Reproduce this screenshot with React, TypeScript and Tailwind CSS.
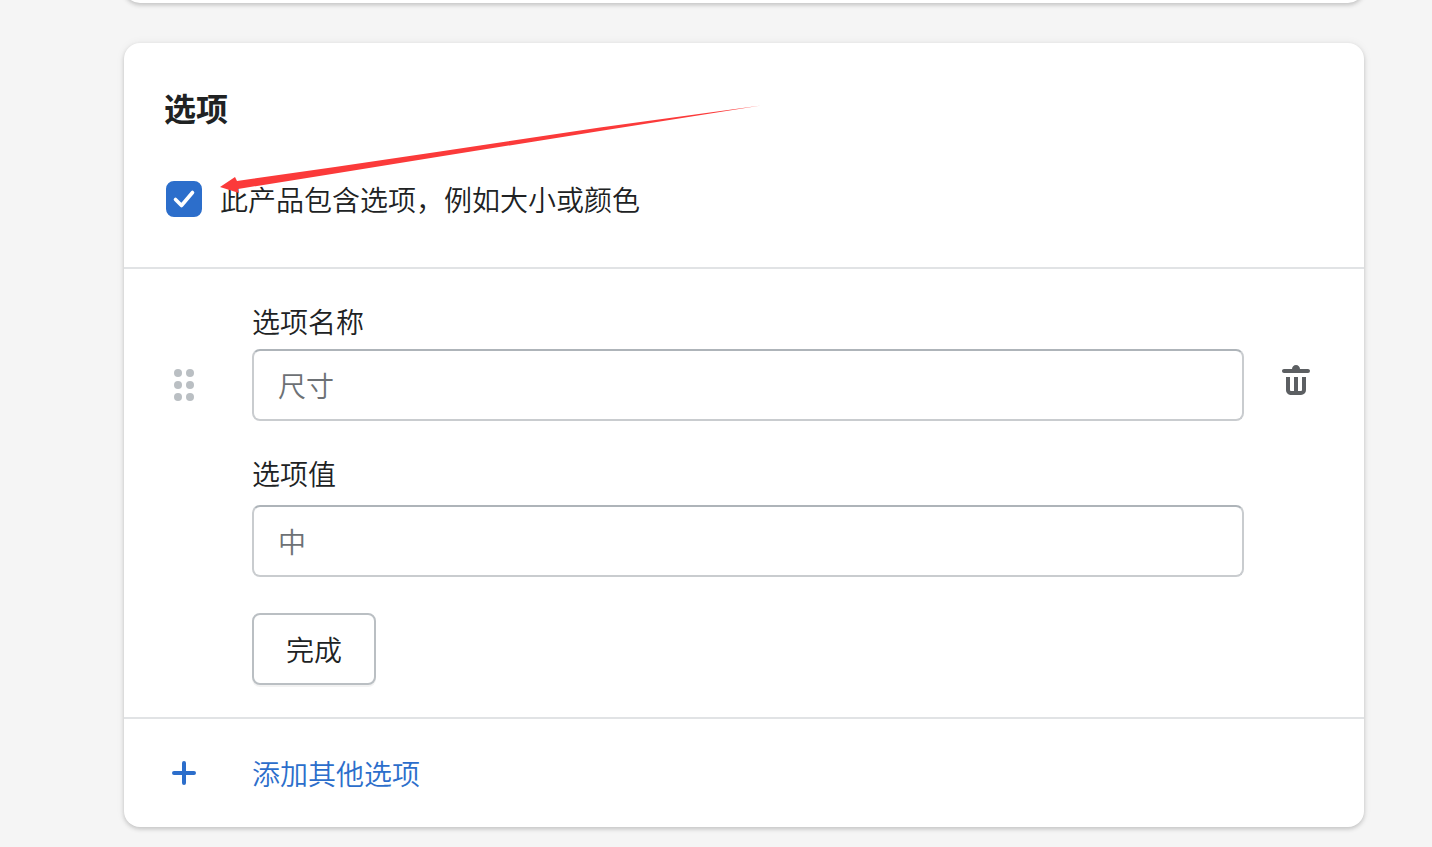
import { useState } from "react";

const DragHandle = () => (
  <svg viewBox="0 0 40 40" className="size-10 fill-[#babfc3]" aria-hidden="true">
    {[8, 20, 32].map((y) => (
      <g key={y}>
        <circle cx="14" cy={y} r="4" />
        <circle cx="26" cy={y} r="4" />
      </g>
    ))}
  </svg>
);

const TrashIcon = () => (
  <svg viewBox="0 0 20 20" className="size-10 fill-[#5c5f62]" aria-hidden="true">
    <path d="M8 3.994C8 2.893 8.895 2 10 2s2 .893 2 1.994h4c.552 0 1 .446 1 .997a1 1 0 0 1-1 .997H4c-.552 0-1-.447-1-.997s.448-.997 1-.997h4zM5 14.508V8h2v6.508a.5.5 0 0 0 .5.498H9V8h2v7.006h1.5a.5.5 0 0 0 .5-.498V8h2v6.508A2.496 2.496 0 0 1 12.5 17h-5C6.119 17 5 15.884 5 14.508z" />
  </svg>
);

const PlusIcon = () => (
  <svg viewBox="0 0 40 40" className="size-10" aria-hidden="true">
    <path
      d="M20 10v20M10 20h20"
      fill="none"
      stroke="currentColor"
      strokeWidth="4"
      strokeLinecap="round"
    />
  </svg>
);

const Arrow = () => (
  <svg
    viewBox="0 0 544 92"
    className="pointer-events-none absolute top-[62px] left-24 h-[92px] w-[544px]"
    aria-hidden="true"
  >
    <path
      d="M0 82L15 72L17 76L115 62L220 46.500L380 22.500L541 0.500L380 26L220 51.500L115 68.500L18 84L19 88Z"
      fill="#fb3a3a"
    />
  </svg>
);

const inputStyle =
  "block h-[72px] w-full rounded-lg border-2 border-[#c9cccf] border-t-[#aeb4b9] bg-white px-6 text-[28px] text-[#202223] outline-none placeholder:text-[#6d7175] placeholder:opacity-100 focus:border-[#2c6ecb]";

const cardStyle =
  "rounded-2xl bg-white shadow-[0_0_10px_rgba(23,24,24,0.06),0_2px_4px_rgba(0,0,0,0.18)]";

const App = () => {
  const [hasOptions, setHasOptions] = useState(true);
  const [name, setName] = useState("");
  const [value, setValue] = useState("");

  return (
    <main className="flow-root min-h-screen overflow-hidden bg-[#f5f5f5] pr-[68px] pb-5 pl-[124px] font-['Noto_Sans_CJK_SC',sans-serif] text-[28px] leading-10 font-[350] text-[#202223]">
      {/* PREVIOUS CARD, SCROLLED OUT */}
      <div className={`-mt-[37px] mb-10 h-10 ${cardStyle}`} />

      <section className={`relative ${cardStyle}`}>
        {/* HEADING */}
        <div className="border-b-2 border-[#e1e3e5] px-10 pt-11 pb-12">
          <h2 className="text-[32px] leading-10 font-bold">选项</h2>
          <div className="mt-[52px] flex items-center">
            <div className="relative ml-0.5 size-9 shrink-0">
              <input
                id="has-options"
                type="checkbox"
                checked={hasOptions}
                onChange={(e) => setHasOptions(e.target.checked)}
                className="peer block size-9 appearance-none rounded-lg border-2 border-[#8c9196] bg-white checked:border-[#2c6ecb] checked:bg-[#2c6ecb]"
              />
              <svg
                viewBox="0 0 36 36"
                className="pointer-events-none absolute inset-0 hidden peer-checked:block"
                aria-hidden="true"
              >
                <path
                  d="M9.500 18.500L15.500 24.500L26.500 11.500"
                  fill="none"
                  stroke="#fff"
                  strokeWidth="3.600"
                  strokeLinecap="round"
                  strokeLinejoin="round"
                />
              </svg>
            </div>
            <label htmlFor="has-options" className="pl-[18px]">
              此产品包含选项，例如大小或颜色
            </label>
          </div>
        </div>

        {/* OPTION */}
        <div className="flex border-b-2 border-[#e1e3e5] pt-8 pr-12 pb-8 pl-10">
          <button type="button" aria-label="拖动" className="mt-16 mr-12 size-10 cursor-grab">
            <DragHandle />
          </button>
          <div className="min-w-0 grow">
            <label htmlFor="option-name" className="mb-2 block">
              选项名称
            </label>
            <input
              id="option-name"
              type="text"
              placeholder="尺寸"
              value={name}
              onChange={(e) => setName(e.target.value)}
              className={inputStyle}
            />
            <label htmlFor="option-value" className="mt-8 mb-3 block">
              选项值
            </label>
            <input
              id="option-value"
              type="text"
              placeholder="中"
              value={value}
              onChange={(e) => setValue(e.target.value)}
              className={inputStyle}
            />
            <button
              type="button"
              className="mt-9 block h-[72px] rounded-lg border-2 border-[#babfc3] bg-white px-8 shadow-[0_2px_0_rgba(0,0,0,0.05)]"
            >
              完成
            </button>
          </div>
          <button type="button" aria-label="删除" className="mt-[60px] ml-8 size-10">
            <TrashIcon />
          </button>
        </div>

        {/* ADD OPTION */}
        <button
          type="button"
          className="flex w-full items-center gap-12 px-10 py-[34px] text-left text-[#2c6ecb]"
        >
          <PlusIcon />
          添加其他选项
        </button>

        <Arrow />
      </section>
    </main>
  );
};

export default App;
